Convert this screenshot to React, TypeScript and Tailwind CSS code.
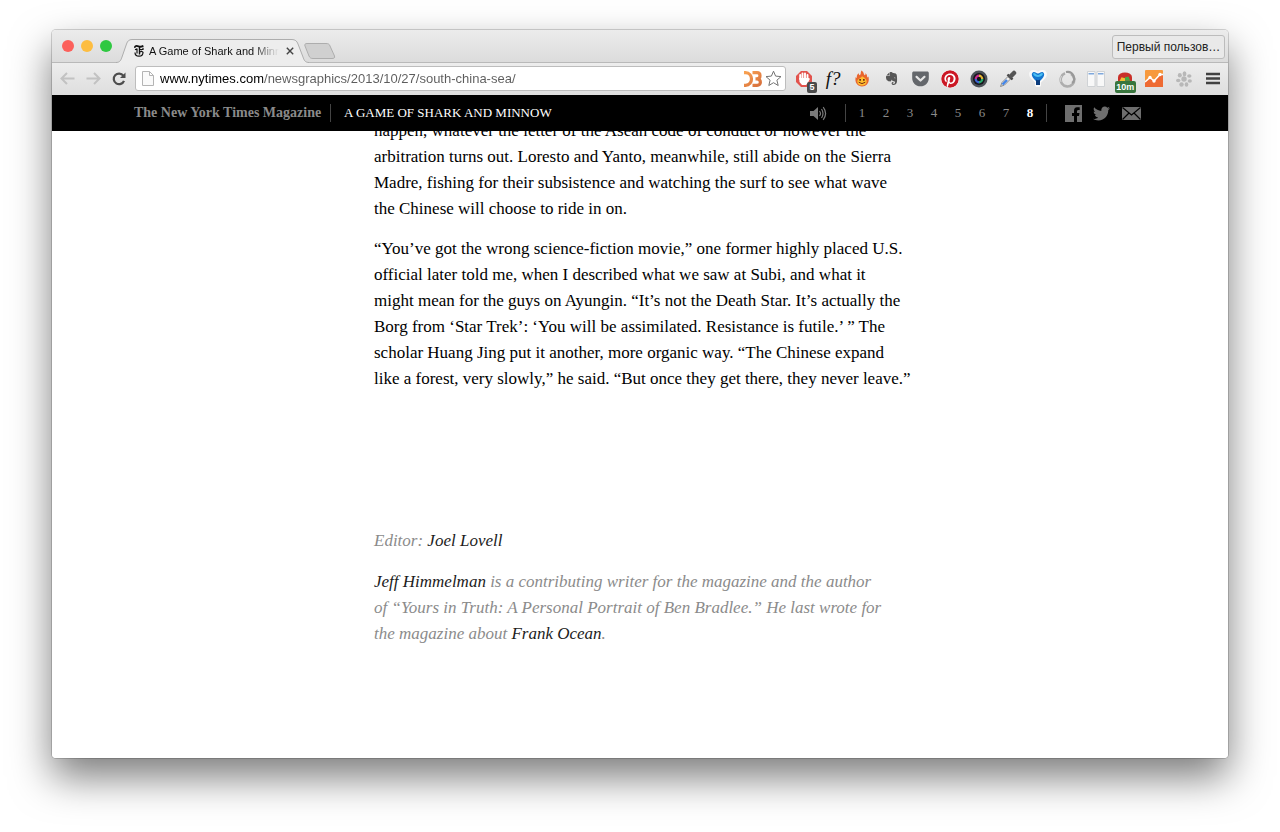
import type { ReactNode } from "react";
import { FaEvernote, FaGetPocket, FaPinterest, FaTwitter } from "react-icons/fa";

function Tool({ label, children }: { label: string; children: ReactNode }) {
  return (
    <button aria-label={label} className="relative flex h-6 w-[22px] shrink-0 items-center justify-center">
      {children}
    </button>
  );
}

function TabStrip() {
  return (
    <div className="flex h-[33px] items-end border-b border-[#b9b9b9] bg-gradient-to-b from-[#ececec] to-[#dcdcdc] pl-[10px]">
      <div className="flex h-8 items-center gap-[7px]">
        <button aria-label="Close window" className="size-3 rounded-full bg-[#fc605b]" />
        <button aria-label="Minimize window" className="size-3 rounded-full bg-[#fdbd40]" />
        <button aria-label="Zoom window" className="size-3 rounded-full bg-[#2fc841]" />
      </div>
      <div className="relative -mb-px ml-1 flex h-6 w-[194px] items-center pl-[18px]">
        <svg className="absolute inset-0 h-6 w-full" viewBox="0 0 194 24" preserveAspectRatio="none" aria-hidden="true">
          <path
            d="M0 23.5C4 23.5 5 21 6 18L10.500 5C11.500 2 13 .5 16 .5H176C179 .5 181 2 182 5L187 18C188 21 189 23.500 193 23.500V24H0Z"
            fill="#ededed"
          />
          <path
            d="M0 23.500C4 23.500 5 21 6 18L10.500 5C11.500 2 13 .5 16 .5H176C179 .5 181 2 182 5L187 18C188 21 189 23.500 193 23.500"
            fill="none"
            stroke="#adadad"
          />
        </svg>
        <svg className="relative h-3 w-[10px]" viewBox="0 0 10 12" fill="none" stroke="#111" aria-hidden="true">
          <path d="M1 2.800C.6.800 2.500.600 4.500 1.300S8.200 1.800 9.300.600" strokeWidth="1.800" />
          <path d="M5.500 2V9.500" strokeWidth="1.400" />
          <path d="M3 3.500V8.500M1 4.800 3 3.800M1 7.500C1 10 2.500 11.200 5 11.200C7.500 11.200 9 9.500 9 7.200L7.500 6.200 6 7M5.500 4.500H9V2.800" strokeWidth="1.200" />
        </svg>
        <span className="relative ml-[5px] w-[130px] bg-gradient-to-r from-[#111] from-80% to-transparent bg-clip-text text-[11px] leading-4 whitespace-nowrap text-transparent">
          A Game of Shark and Minn
        </span>
        <button aria-label="Close tab" className="relative ml-[5px] flex size-3 items-center justify-center">
          <svg className="size-2" viewBox="0 0 8 8" stroke="#444" strokeWidth="1.4" aria-hidden="true">
            <path d="M.8.8 7.200 7.200M7.200.8.8 7.200" />
          </svg>
        </button>
      </div>
      <button aria-label="New tab" className="mb-[3px] -ml-[6px]">
        <svg className="h-4 w-8" viewBox="0 0 32 16" aria-hidden="true">
          <path d="M3 .5H22C24 .5 25.500 1 26 3L30.500 13C31 15 30 15.500 28 15.500H9C7 15.500 6 15 5 13L1 3C.4 1.500 1 .5 3 .5Z" fill="#d0d0d0" stroke="#adadad" />
        </svg>
      </button>
      <button className="mb-[3px] mr-[3px] ml-auto h-6 w-[113px] self-end rounded-[3px] border border-[#bcbcbc] bg-[#e9e9e9] text-center text-[12px] leading-5 whitespace-nowrap text-[#222]">
        Первый пользов…
      </button>
    </div>
  );
}

function ArrowIcon({ flip }: { flip?: boolean }) {
  return (
    <svg className={flip ? "h-[13px] w-[15px] -scale-x-100" : "h-[13px] w-[15px]"} viewBox="0 0 15 13" fill="none" aria-hidden="true">
      <path d="M7 1 1.500 6.500 7 12M2 6.500H14.500" stroke="#c2c2c2" strokeWidth="2" />
    </svg>
  );
}

function Toolbar() {
  return (
    <div className="flex h-8 items-center bg-gradient-to-b from-[#ededed] to-[#dedede] pr-1 pb-px pl-2">
      <button aria-label="Back" className="w-[26px]"><ArrowIcon /></button>
      <button aria-label="Forward" className="w-[26px]"><ArrowIcon flip /></button>
      <button aria-label="Reload" className="w-[23px]">
        <svg className="size-[14px]" viewBox="0 0 14 14" aria-hidden="true">
          <path d="M11.300 3.700A5.300 5.300 0 1 0 12 8.800" fill="none" stroke="#4d4d4d" strokeWidth="2.2" />
          <path d="M13.500.5V6H8Z" fill="#4d4d4d" />
        </svg>
      </button>
      <div className="flex h-[25px] min-w-0 flex-1 items-center rounded-[3px] border border-[#bdbdbd] bg-white pr-[3px] pl-[6px]">
        <svg className="h-[15px] w-3 shrink-0" viewBox="0 0 12 15" fill="#fafafa" stroke="#b4b4b4" aria-hidden="true">
          <path d="M.5.5H7.500L11.500 4.500V14.500H.5ZM7.500.5V4.500H11.500" />
        </svg>
        <input
          aria-label="Address"
          type="text"
          defaultValue="www.nytimes.com/newsgraphics/2013/10/27/south-china-sea/"
          className="ml-[6px] min-w-0 flex-1 bg-[linear-gradient(to_right,#000_103px,#5c5c5c_103px)] bg-clip-text text-[13px] leading-5 text-transparent outline-none"
        />
        <svg className="h-4 w-[18px]" viewBox="0 0 18 16" fill="none" aria-hidden="true">
          <defs>
            <linearGradient id="dthree" x1="0" y1="0" x2="1" y2="1">
              <stop stopColor="#f9a252" /><stop offset="1" stopColor="#d8703c" />
            </linearGradient>
          </defs>
          <path d="M0 1.700H1.500C9.500 1.700 9.500 14.300 1.500 14.300H0M8.500 1.700H13C17 1.700 17 7.800 13 7.800H11.500M13 8C17.500 8 17.500 14.300 13 14.300H8.500" stroke="url(#dthree)" strokeWidth="3.200" />
        </svg>
        <button aria-label="Bookmark this page" className="ml-[3px]">
          <svg className="size-[17px]" viewBox="0 0 17 17" fill="white" stroke="#737373" aria-hidden="true">
            <path d="M8.500 1.200 10.600 6.100 16 6.600 11.900 10.200 13.200 15.500 8.500 12.700 3.800 15.500 5.100 10.200 1 6.600 6.400 6.100Z" />
          </svg>
        </button>
      </div>
      <div className="ml-[7px] flex w-[431px] shrink-0 items-center justify-between">
        <Tool label="Ad blocker, 5 blocked">
          <svg className="size-4" viewBox="0 0 16 16" aria-hidden="true">
            <path d="M5 0H11L16 5V11L11 16H5L0 11V5Z" fill="#e2534d" />
            <path d="M4.200 8V4M6.500 7V2.500M9 7V2.500M11.500 8V4" stroke="#fff" strokeWidth="1.9" strokeLinecap="round" />
            <path d="M3.200 7H12.500L14 7.800 11.500 12.500 10 14H6L3.500 11Z" fill="#fff" />
          </svg>
          <span className="absolute right-[-2px] bottom-[-2px] h-[11px] w-[10px] rounded-[2px] bg-[#4a4a4a] text-center text-[9px] leading-[11px] font-bold text-white">5</span>
        </Tool>
        <Tool label="Identify fonts">
          <span className="font-['Liberation_Serif',serif] text-[19px] leading-5 text-[#111] italic">f?</span>
        </Tool>
        <Tool label="Flame">
          <svg className="h-[17px] w-[14px]" viewBox="0 0 15 17" aria-hidden="true">
            <path d="M7 0C10 2 9 4 10.500 5C11.500 4.500 11.300 3 11 2.500C13.500 4.500 12.500 6 13.500 7.500C14.500 6.500 14.300 6 14.300 6C16 12 13 17 7.500 17C2 17-.6 12 .8 7C1.200 8 2 8 2 8C1.500 5 3 3.500 4 3C4 4 4.500 5 5 5C7 4 5.500 2 7 0Z" fill="#e9662e" />
            <path d="M7.500 6C10 7.500 12.500 9 12.500 11.500C12.500 15 10 16 7.500 16S2.500 15 2.500 11.500C2.500 9 6.500 8 7.500 6Z" fill="#ffbd2f" />
            <path d="M5.500 9V11M9.500 9V11" stroke="#55210f" strokeWidth="1.6" />
            <path d="M4 12.500Q7.500 15.500 11 12.500" fill="none" stroke="#6b2612" />
          </svg>
        </Tool>
        <Tool label="Web clipper"><FaEvernote className="size-[15px] text-[#565656]" /></Tool>
        <Tool label="Save to Pocket"><FaGetPocket className="size-[19px] text-[#64676b]" /></Tool>
        <Tool label="Pin it"><FaPinterest className="size-[18px] rounded-full bg-white text-[#cb1724]" /></Tool>
        <Tool label="Screenshot">
          <svg className="size-[18px]" viewBox="0 0 18 18" aria-hidden="true">
            <circle cx="9" cy="9" r="8.500" fill="#4d5359" />
            <circle cx="9" cy="9" r="6" fill="#17151c" />
            <g fill="none" strokeWidth="2.4">
              <path d="M5.800 9A3.200 3.200 0 0 1 9 5.800" stroke="#c72b8f" />
              <path d="M9 5.800A3.200 3.200 0 0 1 12.200 9" stroke="#e2b535" />
              <path d="M12.200 9A3.200 3.200 0 0 1 9 12.200" stroke="#27a96b" />
              <path d="M9 12.200A3.200 3.200 0 0 1 5.800 9" stroke="#3d65d0" />
            </g>
            <circle cx="9" cy="9" r="2" fill="#15131a" />
          </svg>
        </Tool>
        <Tool label="Colour picker">
          <svg className="size-[18px]" viewBox="0 0 18 18" fill="none" aria-hidden="true">
            <path d="M1.500 16.500 3 12.500 9.500 6 12 8.500 5.500 15Z" fill="#eee" stroke="#888" />
            <path d="M3.500 14.500 8 10" stroke="#4385e8" strokeWidth="2.4" />
            <path d="M8.500 4.500 13.500 9.500" stroke="#444" strokeWidth="2.4" />
            <path d="M11.500 6.500 15 3" stroke="#555" strokeWidth="4.500" strokeLinecap="round" />
          </svg>
        </Tool>
        <Tool label="Highlighter">
          <svg className="h-[17px] w-[18px]" viewBox="0 0 18 17" aria-hidden="true">
            <path d="M4.500 0C7 0 8 1 9 2C10 1 11 0 13.500 0C19 0 19 6 15 9.500L12 12.500V15Q12 17 9 17T6 15V12.500L3 9.500C-1 6-1 0 4.500 0Z" fill="#fafafa" />
            <path d="M4.500 2C6.500 1.800 7.500 3.500 9 3.500S11.500 1.800 13.500 2C17 4 14.500 7.500 11 11V15H7V11C3.500 7.500 1 4 4.500 2Z" fill="#1677cf" />
            <path d="M4.500 3C6.500 3 7.500 5 9 5S11.500 3 13.500 3C14.500 5 12.500 6.500 9 7C5.500 6.500 3.500 5 4.500 3Z" fill="#4cc0f3" />
            <path d="M7 9.500Q9 11 11 9.500V15H7Z" fill="#0c3c7c" />
          </svg>
        </Tool>
        <Tool label="Ring">
          <svg className="size-[18px]" viewBox="0 0 18 18" fill="none" aria-hidden="true">
            <path d="M7 3.300A6.800 6.800 0 1 0 13 3.800" stroke="#adadad" strokeWidth="2.600" />
            <path d="M8 2Q13.500 1 15.500 6T14 13" stroke="#999" strokeWidth="2.200" />
            <path d="M3.500 6Q1.500 9 3 12" stroke="#e2e2e2" strokeWidth=".8" />
          </svg>
        </Tool>
        <Tool label="Side by side">
          <svg className="h-4 w-[18px]" viewBox="0 0 18 16" aria-hidden="true">
            <path d="M.5.5H8V15.500H.5ZM10 .5H17.500V15.500H10Z" fill="#f8f8f8" stroke="#cfd2d5" />
            <path d="M1.500 2.800H7M11 2.800H16.500" stroke="#7fa8dc" strokeWidth="1.500" />
          </svg>
        </Tool>
        <Tool label="Time tracker, 10 minutes">
          <svg className="absolute top-[5px] h-[14px] w-[14px]" viewBox="0 0 16 14" aria-hidden="true">
            <path d="M0 8V5A8 5.500 0 0 1 16 5V14H0Z" fill="#c92f28" />
            <path d="M2 9 4 5 8 6V14H2Z" fill="#f2bf32" />
            <path d="M8 5 12 4 14 9H8Z" fill="#44a844" />
          </svg>
          <span className="absolute bottom-[-2px] h-3 w-[21px] rounded-[2px] bg-[#38753d] text-center text-[9px] leading-3 font-bold text-white">10m</span>
        </Tool>
        <Tool label="Analytics">
          <svg className="h-[17px] w-[18px]" viewBox="0 0 18 17" aria-hidden="true">
            <rect width="18" height="17" rx="1" fill="#f7993d" />
            <path d="M0 12 5 8 9 11 15 4 18 5V17H0Z" fill="#ee6a32" />
            <path d="M0 12 5 7.500 9 11 15 4.500H18" fill="none" stroke="#fff" strokeWidth="1.600" />
            <g fill="#fff"><circle cx="5" cy="7.500" r="1.700" /><circle cx="9" cy="11" r="1.700" /><circle cx="15" cy="4.500" r="1.700" /></g>
          </svg>
        </Tool>
        <Tool label="Paw">
          <svg className="size-4" viewBox="0 0 16 16" fill="#b8b8b8" aria-hidden="true">
            <ellipse cx="8.500" cy="2.700" rx="1.900" ry="2.500" />
            <ellipse cx="13.300" cy="5" rx="2.200" ry="1.700" />
            <ellipse cx="3.800" cy="4.300" rx="2" ry="2.200" />
            <ellipse cx="13.800" cy="10" rx="2.100" ry="1.700" />
            <ellipse cx="2.200" cy="9.500" rx="2.200" ry="1.700" />
            <circle cx="8" cy="8" r="2.700" />
            <ellipse cx="5.500" cy="13.500" rx="2.200" ry="2.300" />
            <ellipse cx="10.500" cy="13.500" rx="1.800" ry="2.300" />
          </svg>
        </Tool>
        <Tool label="Menu">
          <svg className="h-[13px] w-[14px]" viewBox="0 0 14 13" stroke="#414141" strokeWidth="2.600" aria-hidden="true">
            <path d="M0 2H14M0 6.500H14M0 11H14" />
          </svg>
        </Tool>
      </div>
    </div>
  );
}

const chapters = [1, 2, 3, 4, 5, 6, 7, 8];

function SiteHeader() {
  return (
    <header className="relative flex h-9 items-center bg-black pr-[87px] pl-[82px] font-['Liberation_Serif',serif]">
      <a href="#magazine" className="w-[188px] text-[14px] leading-5 font-bold whitespace-nowrap text-[#8a8a8a]">
        The New York Times Magazine
      </a>
      <span className="ml-2 h-[18px] w-px bg-[#444]" />
      <h1 className="ml-[13px] text-[13px] leading-5 whitespace-nowrap text-white">A GAME OF SHARK AND MINNOW</h1>
      <button aria-label="Toggle sound" className="ml-auto">
        <svg className="h-[15px] w-[17px]" viewBox="0 0 17 15" fill="none" aria-hidden="true">
          <path d="M0 5H3.500L8 1V14L3.500 10H0Z" fill="#7a7a7a" />
          <path d="M9.500 5Q11.500 7.500 9.500 10M11.500 3Q14.500 7.500 11.500 12M13.200 1.200Q18 7.500 13.200 13.800" stroke="#7a7a7a" strokeWidth="1.200" />
        </svg>
      </button>
      <nav aria-label="Chapters" className="ml-[18px] flex border-x border-[#444] px-1">
        {chapters.map((n) => (
          <a
            key={n}
            href={`#chapter-${n}`}
            className={n === 8 ? "w-6 text-center text-[13px] leading-[18px] font-bold text-white" : "w-6 text-center text-[13px] leading-[18px] text-[#8a8a8a]"}
          >
            {n}
          </a>
        ))}
      </nav>
      <a href="#facebook" aria-label="Facebook" className="ml-[18px]">
        <svg className="size-[17px]" viewBox="0 0 17 17" aria-hidden="true">
          <path d="M0 0H17V17H12V11H14L14.500 8H12V6.200Q12 5 13.500 5H14.700V2.300H12Q9 2.300 9 6V8H7V11H9V17H0Z" fill="#6e6e6e" />
        </svg>
      </a>
      <a href="#twitter" aria-label="Twitter" className="ml-[11px]"><FaTwitter className="size-[17px] text-[#6e6e6e]" /></a>
      <a href="#email" aria-label="Email" className="ml-3">
        <svg className="h-[13px] w-[19px]" viewBox="0 0 19 13" aria-hidden="true">
          <path d="M0 0H19V13H0Z" fill="#6e6e6e" />
          <path d="M.5.5 9.500 8 18.500.5M.5 12.500 7 6M18.500 12.500 12 6" fill="none" stroke="#000" strokeWidth="1.200" />
        </svg>
      </a>
    </header>
  );
}

function Article() {
  return (
    <main className="flex-1 overflow-hidden bg-white">
      <article className="mx-auto -mt-[13px] w-[532px] max-w-full font-['Liberation_Serif',serif] text-[17px] leading-[26px] text-black">
        <p>
          happen, whatever the letter of the Asean code of conduct or however the<br />
          arbitration turns out. Loresto and Yanto, meanwhile, still abide on the Sierra<br />
          Madre, fishing for their subsistence and watching the surf to see what wave<br />
          the Chinese will choose to ride in on.
        </p>
        <p className="mt-[14px] whitespace-nowrap">
          “You’ve got the wrong science-fiction movie,” one former highly placed U.S.<br />
          official later told me, when I described what we saw at Subi, and what it<br />
          might mean for the guys on Ayungin. “It’s not the Death Star. It’s actually the<br />
          Borg from ‘Star Trek’: ‘You will be assimilated. Resistance is futile.’ ” The<br />
          scholar Huang Jing put it another, more organic way. “The Chinese expand<br />
          like a forest, very slowly,” he said. “But once they get there, they never leave.”
        </p>
        <footer className="mt-[136px] text-[#8b8b8b] italic">
          <p>Editor: <span className="text-[#1c1c1c]">Joel Lovell</span></p>
          <p className="mt-[15px]">
            <span className="text-[#1c1c1c]">Jeff Himmelman</span> is a contributing writer for the magazine and the author<br />
            of “Yours in Truth: A Personal Portrait of Ben Bradlee.” He last wrote for<br />
            the magazine about <a href="#frank-ocean" className="text-[#1c1c1c]">Frank Ocean</a>.
          </p>
        </footer>
      </article>
    </main>
  );
}

export default function App() {
  return (
    <div className="flex min-h-screen flex-col bg-white px-[52px] pt-[30px] pb-[74px] font-['Liberation_Sans',sans-serif]">
      <div className="flex flex-1 flex-col overflow-hidden rounded-[4px] shadow-[0_0_0_1px_rgba(0,0,0,0.16),0_19px_40px_rgba(0,0,0,0.52)]">
        <TabStrip />
        <Toolbar />
        <SiteHeader />
        <Article />
      </div>
    </div>
  );
}
